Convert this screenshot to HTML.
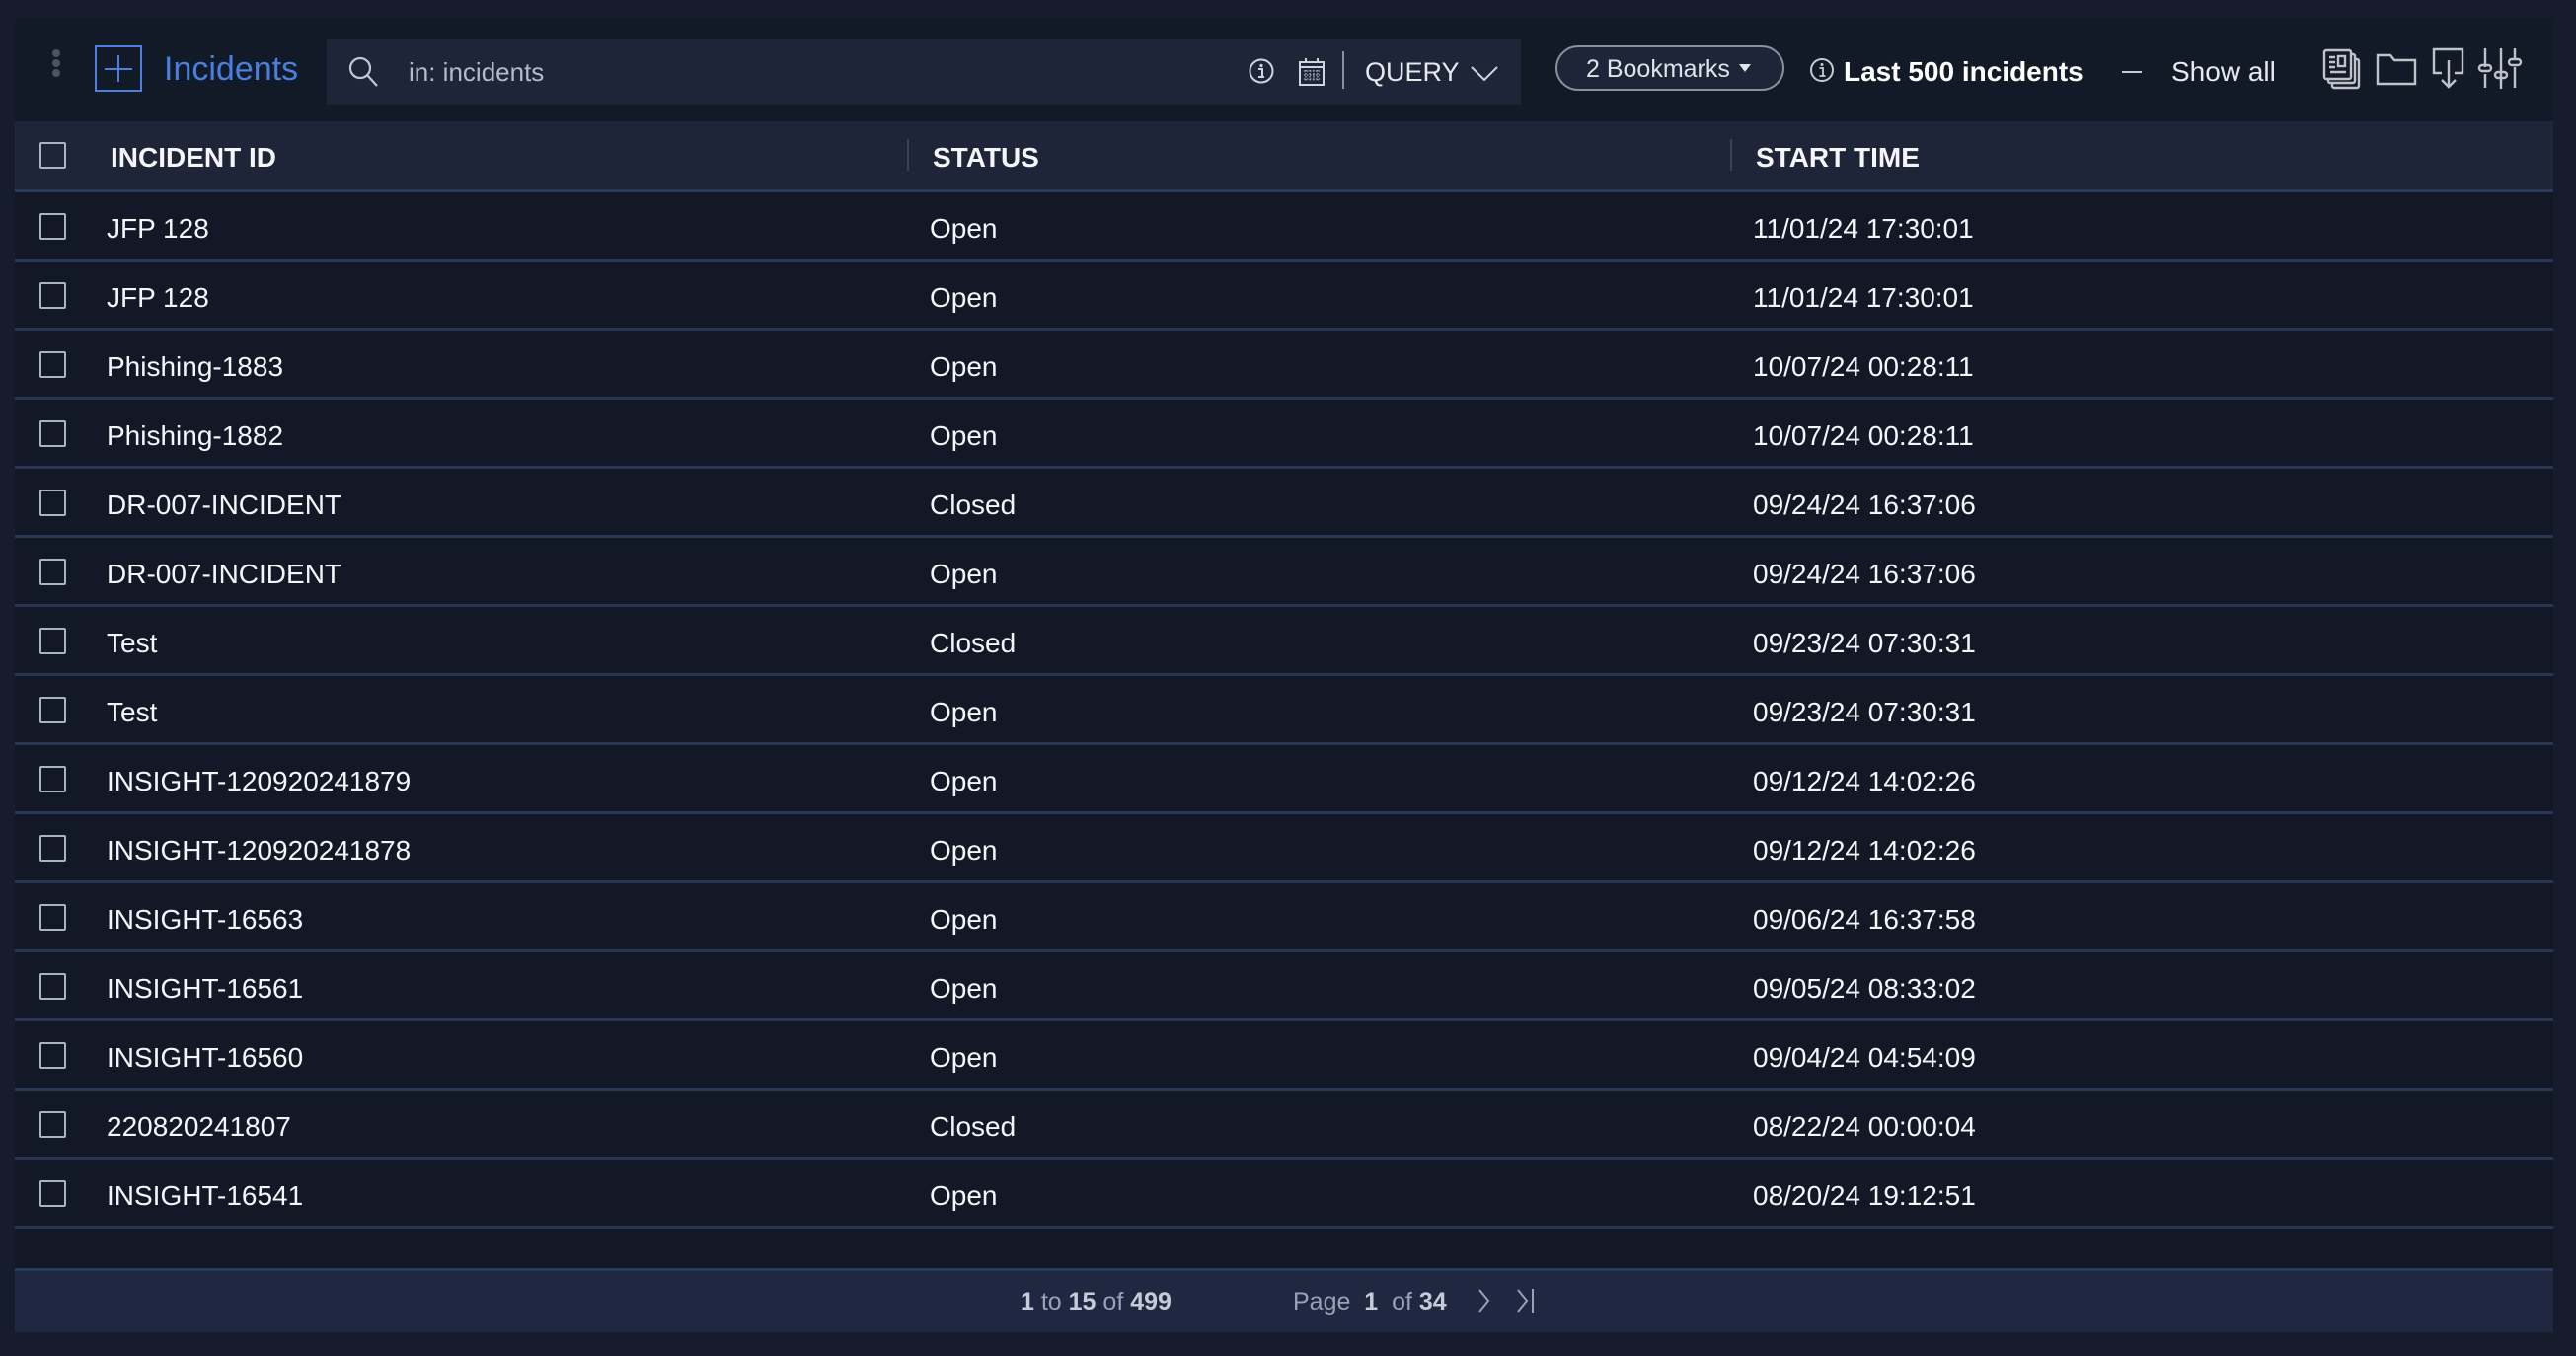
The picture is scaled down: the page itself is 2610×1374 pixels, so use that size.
<!DOCTYPE html>
<html><head><meta charset="utf-8"><style>
*{margin:0;padding:0;box-sizing:border-box}
body{width:2610px;height:1374px;background:#171c2c;font-family:"Liberation Sans",Arial,sans-serif;position:relative;overflow:hidden;color:#fff}
.a{position:absolute}
.panel{left:15px;top:18px;width:2572px;height:1332px;background:#121826}
.tb{left:15px;top:18px;width:2572px;height:105px;background:#131a27}
.search{left:331px;top:40px;width:1210px;height:66px;background:#1e2539}
.hdr{left:15px;top:123px;width:2572px;height:72px;background:#1e2539;border-bottom:3px solid #2b3a58}
.hd{font-size:28px;font-weight:bold;top:144px;color:#f4f6fa}
.row{left:15px;width:2572px;height:70px;border-bottom:3px solid #2a3753}
.cb{width:27px;height:27px;border:2.5px solid #a9b4c2;border-radius:2px}
.t{font-size:28px;color:#f4f6fa;margin-top:2px}
.foot{left:15px;top:1285px;width:2572px;height:65px;background:#1f2840;border-top:3px solid #2b3a58}
.ft{font-size:25px;color:#9aa3b4;top:1305px}
.ft b{color:#c6ccd7;font-weight:bold}
</style></head><body>
<div class="a panel"></div>
<div class="a tb"></div>
<div class="a" style="left:53px;top:50px;width:8px;height:8px;border-radius:50%;background:#4b5466"></div>
<div class="a" style="left:53px;top:60px;width:8px;height:8px;border-radius:50%;background:#4b5466"></div>
<div class="a" style="left:53px;top:70px;width:8px;height:8px;border-radius:50%;background:#4b5466"></div>
<div class="a" style="left:96px;top:46px;width:48px;height:47px;border:2.5px solid #4a7fe0"></div>
<div class="a" style="left:119px;top:56px;width:2px;height:27px;background:#4a7fe0"></div>
<div class="a" style="left:106px;top:69px;width:28px;height:2px;background:#4a7fe0"></div>
<div class="a" style="left:166px;top:51px;font-size:34px;color:#4a7fe0">Incidents</div>
<div class="a search"></div>
<svg class="a" style="left:352px;top:56px" width="34" height="34" viewBox="0 0 34 34"><circle cx="13" cy="13" r="10" fill="none" stroke="#c3c9d3" stroke-width="2.2"/><line x1="20" y1="20" x2="30" y2="31" stroke="#c3c9d3" stroke-width="2.2"/></svg>
<div class="a" style="left:414px;top:58px;font-size:26px;color:#b5bcc8">in: incidents</div>
<svg class="a" style="left:1264px;top:58px" width="28" height="28" viewBox="0 0 28 28"><circle cx="14" cy="14" r="11.5" fill="none" stroke="#d0d5dd" stroke-width="2"/><circle cx="14" cy="8.5" r="1.6" fill="#d0d5dd"/><path d="M11 12h4v8M11 20h6" fill="none" stroke="#d0d5dd" stroke-width="2"/></svg>
<svg class="a" style="left:1315px;top:58px" width="28" height="30" viewBox="0 0 28 30"><rect x="2" y="5" width="24" height="23" fill="none" stroke="#d0d5dd" stroke-width="2"/><line x1="2" y1="10" x2="26" y2="10" stroke="#d0d5dd" stroke-width="2"/><line x1="8" y1="1" x2="8" y2="6" stroke="#d0d5dd" stroke-width="2"/><line x1="20" y1="1" x2="20" y2="6" stroke="#d0d5dd" stroke-width="2"/><path d="M6 14h16M6 18h16M6 22h16M8 13v11M12 13v11M16 13v11M20 13v11" stroke="#d0d5dd" stroke-width="1" stroke-dasharray="1.5 1.5"/></svg>
<div class="a" style="left:1360px;top:52px;width:2px;height:38px;background:#8790a0"></div>
<div class="a" style="left:1383px;top:58px;font-size:27px;color:#e6e9ee">QUERY</div>
<svg class="a" style="left:1489px;top:66px" width="30" height="18" viewBox="0 0 30 18"><path d="M2 2l13 13 13-13" fill="none" stroke="#d0d5dd" stroke-width="2"/></svg>
<div class="a" style="left:1576px;top:46px;width:232px;height:46px;border:2.5px solid #8a909a;border-radius:23px;background:#1e2539"></div>
<div class="a" style="left:1607px;top:56px;font-size:25px;color:#dfe3ea">2 Bookmarks</div>
<div class="a" style="left:1762px;top:65px;width:0;height:0;border-left:6px solid transparent;border-right:6px solid transparent;border-top:8px solid #dfe3ea"></div>
<svg class="a" style="left:1833px;top:57px" width="26" height="28" viewBox="0 0 26 28"><circle cx="13" cy="14" r="11" fill="none" stroke="#c7ccd4" stroke-width="2"/><circle cx="13" cy="8.5" r="1.5" fill="#c7ccd4"/><path d="M10.5 12h3.5v8M10.5 20h6" fill="none" stroke="#c7ccd4" stroke-width="1.8"/></svg>
<div class="a" style="left:1868px;top:57px;font-size:28px;font-weight:bold;color:#fff">Last 500 incidents</div>
<div class="a" style="left:2150px;top:72px;width:20px;height:2px;background:#c7ccd4"></div>
<div class="a" style="left:2200px;top:57px;font-size:28px;color:#e6e9ee">Show all</div>
<svg class="a" style="left:2340px;top:30px" width="240" height="80" viewBox="2340 30 240 80" fill="none" stroke="#bfc3c9" stroke-width="2.4">
<rect x="2363" y="60" width="27" height="29" rx="2"/><rect x="2359" y="55" width="27" height="29" rx="2" fill="#131a27"/><rect x="2355" y="51" width="27" height="29" rx="2" fill="#131a27"/>
<path d="M2360 58h6M2360 63h6M2360 68h6M2361 73h16"/><rect x="2369" y="57" width="7" height="10"/>
<path d="M2409 56h13l4 5h21v24h-38z"/>
<path d="M2474 74h-8v-24h29v24h-8M2481 61v27M2474 81l7 7 7-7"/>
<path d="M2518 49v19M2518 75v14M2534 49v41M2548 49v12M2548 68v21"/>
<rect x="2512" y="66" width="12" height="6" rx="3"/><rect x="2528" y="73" width="12" height="6" rx="3"/><rect x="2542" y="60" width="12" height="6" rx="3"/>
</svg>
<div class="a hdr"></div>
<div class="a cb" style="left:40px;top:144px"></div>
<div class="a hd" style="left:112px">INCIDENT ID</div>
<div class="a" style="left:919px;top:141px;width:2px;height:32px;background:#38425a"></div>
<div class="a hd" style="left:945px">STATUS</div>
<div class="a" style="left:1753px;top:141px;width:2px;height:32px;background:#38425a"></div>
<div class="a hd" style="left:1779px">START TIME</div>
<div class="a row" style="top:195px"></div><div class="a cb" style="left:40px;top:216px"></div><div class="a t" style="left:108px;top:214px">JFP 128</div><div class="a t" style="left:942px;top:214px">Open</div><div class="a t" style="left:1776px;top:214px">11/01/24 17:30:01</div>
<div class="a row" style="top:265px"></div><div class="a cb" style="left:40px;top:286px"></div><div class="a t" style="left:108px;top:284px">JFP 128</div><div class="a t" style="left:942px;top:284px">Open</div><div class="a t" style="left:1776px;top:284px">11/01/24 17:30:01</div>
<div class="a row" style="top:335px"></div><div class="a cb" style="left:40px;top:356px"></div><div class="a t" style="left:108px;top:354px">Phishing-1883</div><div class="a t" style="left:942px;top:354px">Open</div><div class="a t" style="left:1776px;top:354px">10/07/24 00:28:11</div>
<div class="a row" style="top:405px"></div><div class="a cb" style="left:40px;top:426px"></div><div class="a t" style="left:108px;top:424px">Phishing-1882</div><div class="a t" style="left:942px;top:424px">Open</div><div class="a t" style="left:1776px;top:424px">10/07/24 00:28:11</div>
<div class="a row" style="top:475px"></div><div class="a cb" style="left:40px;top:496px"></div><div class="a t" style="left:108px;top:494px">DR-007-INCIDENT</div><div class="a t" style="left:942px;top:494px">Closed</div><div class="a t" style="left:1776px;top:494px">09/24/24 16:37:06</div>
<div class="a row" style="top:545px"></div><div class="a cb" style="left:40px;top:566px"></div><div class="a t" style="left:108px;top:564px">DR-007-INCIDENT</div><div class="a t" style="left:942px;top:564px">Open</div><div class="a t" style="left:1776px;top:564px">09/24/24 16:37:06</div>
<div class="a row" style="top:615px"></div><div class="a cb" style="left:40px;top:636px"></div><div class="a t" style="left:108px;top:634px">Test</div><div class="a t" style="left:942px;top:634px">Closed</div><div class="a t" style="left:1776px;top:634px">09/23/24 07:30:31</div>
<div class="a row" style="top:685px"></div><div class="a cb" style="left:40px;top:706px"></div><div class="a t" style="left:108px;top:704px">Test</div><div class="a t" style="left:942px;top:704px">Open</div><div class="a t" style="left:1776px;top:704px">09/23/24 07:30:31</div>
<div class="a row" style="top:755px"></div><div class="a cb" style="left:40px;top:776px"></div><div class="a t" style="left:108px;top:774px">INSIGHT-120920241879</div><div class="a t" style="left:942px;top:774px">Open</div><div class="a t" style="left:1776px;top:774px">09/12/24 14:02:26</div>
<div class="a row" style="top:825px"></div><div class="a cb" style="left:40px;top:846px"></div><div class="a t" style="left:108px;top:844px">INSIGHT-120920241878</div><div class="a t" style="left:942px;top:844px">Open</div><div class="a t" style="left:1776px;top:844px">09/12/24 14:02:26</div>
<div class="a row" style="top:895px"></div><div class="a cb" style="left:40px;top:916px"></div><div class="a t" style="left:108px;top:914px">INSIGHT-16563</div><div class="a t" style="left:942px;top:914px">Open</div><div class="a t" style="left:1776px;top:914px">09/06/24 16:37:58</div>
<div class="a row" style="top:965px"></div><div class="a cb" style="left:40px;top:986px"></div><div class="a t" style="left:108px;top:984px">INSIGHT-16561</div><div class="a t" style="left:942px;top:984px">Open</div><div class="a t" style="left:1776px;top:984px">09/05/24 08:33:02</div>
<div class="a row" style="top:1035px"></div><div class="a cb" style="left:40px;top:1056px"></div><div class="a t" style="left:108px;top:1054px">INSIGHT-16560</div><div class="a t" style="left:942px;top:1054px">Open</div><div class="a t" style="left:1776px;top:1054px">09/04/24 04:54:09</div>
<div class="a row" style="top:1105px"></div><div class="a cb" style="left:40px;top:1126px"></div><div class="a t" style="left:108px;top:1124px">220820241807</div><div class="a t" style="left:942px;top:1124px">Closed</div><div class="a t" style="left:1776px;top:1124px">08/22/24 00:00:04</div>
<div class="a row" style="top:1175px"></div><div class="a cb" style="left:40px;top:1196px"></div><div class="a t" style="left:108px;top:1194px">INSIGHT-16541</div><div class="a t" style="left:942px;top:1194px">Open</div><div class="a t" style="left:1776px;top:1194px">08/20/24 19:12:51</div>
<div class="a foot"></div>
<div class="a ft" style="left:1034px"><b>1</b> to <b>15</b> of <b>499</b></div>
<div class="a ft" style="left:1310px">Page &nbsp;<b>1</b> &nbsp;of <b>34</b></div>
<svg class="a" style="left:1496px;top:1304px" width="70" height="30" viewBox="0 0 70 30" fill="none" stroke="#9aa3b4" stroke-width="2"><path d="M3 3l9 11-9 11M42 3l9 11-9 11M57 2v24"/></svg>
</body></html>
